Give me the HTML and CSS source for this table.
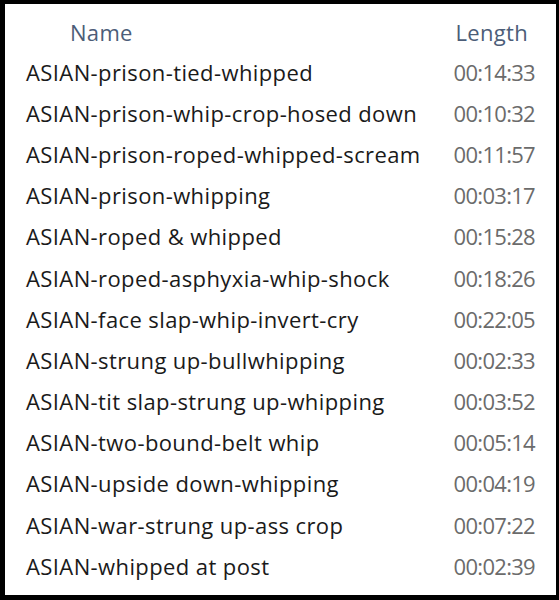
FILE: index.html
```html
<!DOCTYPE html>
<html lang="en">
<head>
    <meta charset="UTF-8">
    <title>Playlist</title>
    <link rel="stylesheet" href="styles.css">
</head>
<body>
    <div class="list">
        <div class="head">
            <span class="col-name">Name</span>
            <span class="col-len">Length</span>
        </div>
        <div class="row"><span class="name">ASIAN-prison-tied-whipped</span><span class="len">00:14:33</span></div>
        <div class="row"><span class="name">ASIAN-prison-whip-crop-hosed down</span><span class="len">00:10:32</span></div>
        <div class="row"><span class="name">ASIAN-prison-roped-whipped-scream</span><span class="len">00:11:57</span></div>
        <div class="row"><span class="name">ASIAN-prison-whipping</span><span class="len">00:03:17</span></div>
        <div class="row"><span class="name">ASIAN-roped &amp; whipped</span><span class="len">00:15:28</span></div>
        <div class="row"><span class="name">ASIAN-roped-asphyxia-whip-shock</span><span class="len">00:18:26</span></div>
        <div class="row"><span class="name">ASIAN-face slap-whip-invert-cry</span><span class="len">00:22:05</span></div>
        <div class="row"><span class="name">ASIAN-strung up-bullwhipping</span><span class="len">00:02:33</span></div>
        <div class="row"><span class="name">ASIAN-tit slap-strung up-whipping</span><span class="len">00:03:52</span></div>
        <div class="row"><span class="name">ASIAN-two-bound-belt whip</span><span class="len">00:05:14</span></div>
        <div class="row"><span class="name">ASIAN-upside down-whipping</span><span class="len">00:04:19</span></div>
        <div class="row"><span class="name">ASIAN-war-strung up-ass crop</span><span class="len">00:07:22</span></div>
        <div class="row"><span class="name">ASIAN-whipped at post</span><span class="len">00:02:39</span></div>
    </div>
</body>
</html>
```

FILE: styles.css
```css
html, body {
    margin: 0;
    padding: 0;
    background: #000;
}
.list {
    box-sizing: border-box;
    width: 559px;
    height: 600px;
    border-style: solid;
    border-color: #000;
    border-width: 4px 3px 5px 5px;
    background: #fff;
    font-family: "Open Sans", "Noto Sans", sans-serif;
    font-size: 22px;
    line-height: 30px;
    color: #1a1a1a;
}
.head {
    display: flex;
    justify-content: space-between;
    height: 47px;
    box-sizing: border-box;
    padding: 13px 28px 0 65px;
    color: #4c5d78;
    letter-spacing: 0.3px;
}
.row {
    display: flex;
    justify-content: space-between;
    align-items: center;
    height: 41.2px;
    padding: 0 21px 0 21px;
}
.name {
    letter-spacing: 0.4px;
}
.len {
    color: #6b6b6b;
    letter-spacing: -0.7px;
}
```
